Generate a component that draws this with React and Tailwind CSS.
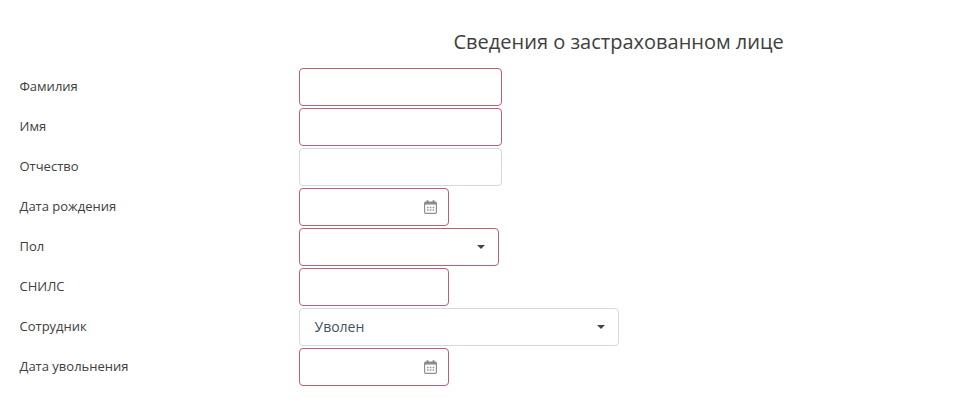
function Calendar() {
  return (
    <svg className="h-[14px] w-[13px]" viewBox="0 0 13 14" fill="none">
      <rect x="0.6" y="2.1" width="11.8" height="11.3" rx="1.2" stroke="#8f8f8f" strokeWidth="1.2" />
      <path d="M0.6 2H12.4V4.6H0.6Z" fill="#8f8f8f" />
      <path d="M3.5 0.3V3M9.5 0.3V3" stroke="#858585" strokeWidth="1.8" />
      <path d="M3 7.5H10.2M3 10H10.2" stroke="#969696" strokeWidth="1.3" strokeDasharray="1.6 1.2" />
    </svg>
  );
}

function Caret() {
  return <span className="border-x-4 border-t-4 border-x-transparent border-t-[#444]" />;
}

const rows = [
  { label: "Фамилия", box: "w-[203px] border-[#bc6073]" },
  { label: "Имя", box: "w-[203px] border-[#bc6073]" },
  { label: "Отчество", box: "w-[203px] border-[#d3d9dc]" },
  { label: "Дата рождения", box: "w-[150px] border-[#bc6073] pr-[11px]", icon: <Calendar /> },
  { label: "Пол", box: "w-[200px] border-[#bc6073] pr-[13px]", icon: <Caret /> },
  { label: "СНИЛС", box: "w-[150px] border-[#bc6073]" },
  { label: "Сотрудник", box: "w-[320px] border-[#d3d9dc] pr-[13px]", value: "Уволен", icon: <Caret /> },
  { label: "Дата увольнения", box: "w-[150px] border-[#bc6073] pr-[11px]", icon: <Calendar /> },
];

export default function App() {
  return (
    <main className="h-[402px] w-[976px] overflow-hidden bg-white pt-[27px] font-['Open_Sans',sans-serif]">
      <h1 className="ml-[453.5px] h-10 text-[20px] leading-[30px] whitespace-nowrap text-[#404040]">Сведения о застрахованном лице</h1>
      {rows.map((row) => (
        <div key={row.label} className="flex h-10 items-center">
          <div className="ml-[19.5px] w-[279.5px] pb-0.5 text-[13px] leading-5 text-[#404040]">{row.label}</div>
          <div className={`flex h-[38px] items-center justify-between rounded-[4px] border pl-[14.5px] ${row.box}`}>
            <span className="text-[14px] leading-5 text-[#3f5367]">{row.value}</span>
            {row.icon}
          </div>
        </div>
      ))}
    </main>
  );
}
